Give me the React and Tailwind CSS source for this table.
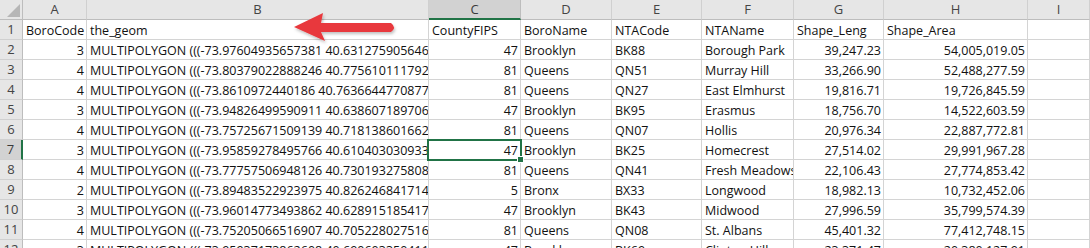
import React from "react";

const cols = ["A", "B", "C", "D", "E", "F", "G", "H", "I"];

const rows = [
  ["BoroCode", "the_geom", "CountyFIPS", "BoroName", "NTACode", "NTAName", "Shape_Leng", "Shape_Area", ""],
  ["3", "MULTIPOLYGON (((-73.97604935657381 40.631275905646", "47", "Brooklyn", "BK88", "Borough Park", "39,247.23", "54,005,019.05", ""],
  ["4", "MULTIPOLYGON (((-73.80379022888246 40.775610111792", "81", "Queens", "QN51", "Murray Hill", "33,266.90", "52,488,277.59", ""],
  ["4", "MULTIPOLYGON (((-73.8610972440186 40.7636644770877", "81", "Queens", "QN27", "East Elmhurst", "19,816.71", "19,726,845.59", ""],
  ["3", "MULTIPOLYGON (((-73.94826499590911 40.638607189706", "47", "Brooklyn", "BK95", "Erasmus", "18,756.70", "14,522,603.59", ""],
  ["4", "MULTIPOLYGON (((-73.75725671509139 40.718138601662", "81", "Queens", "QN07", "Hollis", "20,976.34", "22,887,772.81", ""],
  ["3", "MULTIPOLYGON (((-73.95859278495766 40.610403030933", "47", "Brooklyn", "BK25", "Homecrest", "27,514.02", "29,991,967.28", ""],
  ["4", "MULTIPOLYGON (((-73.77757506948126 40.730193275808", "81", "Queens", "QN41", "Fresh Meadows", "22,106.43", "27,774,853.42", ""],
  ["2", "MULTIPOLYGON (((-73.89483522923975 40.826246841714", "5", "Bronx", "BX33", "Longwood", "18,982.13", "10,732,452.06", ""],
  ["3", "MULTIPOLYGON (((-73.96014773493862 40.628915185417", "47", "Brooklyn", "BK43", "Midwood", "27,996.59", "35,799,574.39", ""],
  ["4", "MULTIPOLYGON (((-73.75205066516907 40.705228027516", "81", "Queens", "QN08", "St. Albans", "45,401.32", "77,412,748.15", ""],
  ["3", "MULTIPOLYGON (((-73.95937173862608 40.690603350411", "47", "Brooklyn", "BK69", "Clinton Hill", "23,371.47", "20,380,127.91", ""],
];

const numericCols = new Set([0, 2, 6, 7]);

export default function App() {
  return (
    <div className="relative w-[1090px] h-[248px] overflow-hidden bg-white font-['Open_Sans',sans-serif] text-[12.5px] text-[#111]">
      <div className="grid grid-cols-[23px_64px_342px_92px_91px_90px_92px_90px_144px_62px]">
        {/* corner */}
        <div className="relative h-5 bg-[#e6e6e6] border-r border-b border-[#bdbdbd]">
          <svg className="absolute right-[2px] bottom-[2px]" width="13" height="13" viewBox="0 0 13 13">
            <polygon points="13,0 13,13 0,13" fill="#b6b6b6" />
          </svg>
        </div>
        {cols.map((c) => (
          <div
            key={c}
            className={
              c === "C"
                ? "h-5 flex items-center justify-center bg-[#d2d2d2] border-r border-[#bdbdbd] border-b-2 border-b-[#217346] text-[#3a3a3a] leading-none text-[13px]"
                : "h-5 flex items-center justify-center bg-[#e6e6e6] border-r border-b border-r-[#d0d0d0] border-b-[#bdbdbd] text-[#444] leading-none text-[13px]"
            }
          >
            {c}
          </div>
        ))}
        {rows.map((r, ri) => (
          <React.Fragment key={ri}>
            <div
              className={
                ri === 6
                  ? "h-5 flex items-center justify-center bg-[#d2d2d2] border-r-2 border-r-[#217346] border-b border-b-[#d0d0d0] text-[#3a3a3a] leading-none text-[13px]"
                  : "h-5 flex items-center justify-center bg-[#e6e6e6] border-r border-b border-r-[#bdbdbd] border-b-[#d0d0d0] text-[#444] leading-none text-[13px]"
              }
            >
              {ri + 1}
            </div>
            {r.map((v, ci) => (
              <div
                key={ci}
                className={
                  ri > 0 && numericCols.has(ci)
                    ? "h-5 overflow-hidden whitespace-nowrap border-r border-b border-[#d4d4d4] pr-[2px] text-right leading-[19px] pt-px"
                    : "h-5 overflow-hidden whitespace-nowrap border-r border-b border-[#d4d4d4] pl-[3px] leading-[19px] pt-px"
                }
              >
                {v}
              </div>
            ))}
          </React.Fragment>
        ))}
      </div>

      {/* selection on C7 */}
      <div className="absolute left-[427px] top-[139px] w-[95px] h-[22px] border-2 border-[#217346]" />
      <div className="absolute left-[517px] top-[156px] w-[7px] h-[7px] bg-[#217346] border border-white" />

      {/* red arrow annotation */}
      <svg className="absolute left-[288px] top-[8px]" width="120" height="40" viewBox="0 0 120 40">
        <defs>
          <filter id="sh" x="-10%" y="-30%" width="130%" height="170%">
            <feDropShadow dx="1" dy="2" stdDeviation="1.5" floodColor="#000" floodOpacity="0.25" />
          </filter>
        </defs>
        <path
          d="M6 19 L35 5 L33 15 L103 15 Q109 19.5 103 24 L33 24 L37 33 Z"
          fill="#e8393c"
          filter="url(#sh)"
          strokeLinejoin="round"
        />
      </svg>
    </div>
  );
}
